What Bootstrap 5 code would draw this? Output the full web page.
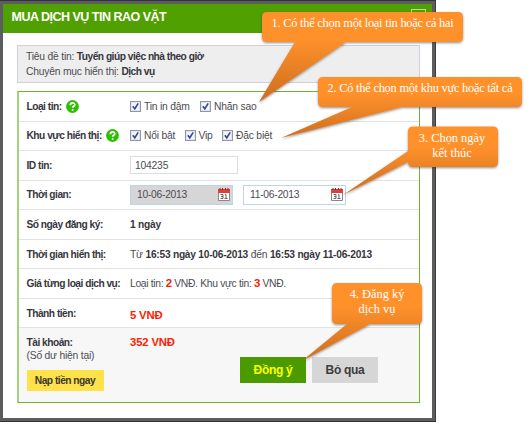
<!DOCTYPE html>
<html lang="vi">
<head>
<meta charset="utf-8">
<meta name="viewport" content="width=device-width, initial-scale=1">
<title>Mua dịch vụ tin rao vặt</title>
<link href="https://cdn.jsdelivr.net/npm/bootstrap@5.3.0/dist/css/bootstrap.min.css" rel="stylesheet">
<style>
body{font:10.3px/15px "Liberation Sans",Arial,sans-serif;letter-spacing:-.2px;color:#4c4c54;background:#fff;width:530px;height:423px}
b{color:#36363c;font-size:10.2px;letter-spacing:-.5px}
b.num{font-size:10.2px;letter-spacing:-.24px}
.frame{width:435.5px;height:422px;background:#5b5d5e;border-top:1px solid #33343a;border-right:1px solid #3c3d3f;border-bottom:1px solid #333;padding:3px}
.dialog{height:414px;background:#fff}
.title-bar{height:29px;background:#4fa000;color:#fff;font-size:12.5px;letter-spacing:-.5px;font-weight:bold;padding:0 12px 2px 8.5px}
.close-box{width:15px;height:14px;border:1px solid #b9dd94;margin-top:5px;margin-right:-6px}
.info{margin:12px 12px 8px 14px;height:38px;background:#eee;border:1px solid #cfd0dc;padding:3px 8px}
.sheet{margin:0 12px 0 14px;height:311.5px;border:1px solid #6db52f;border-left:2px solid #a5d27d}
.line{height:29.55px;border-bottom:1px solid #e2e2e2;padding-left:7.5px;white-space:nowrap}
.key{width:103.5px;flex:none}
.foot{flex:1;background:#f7f7f7;padding:8px 0 0 7.5px;line-height:13px;white-space:nowrap}
.opt-a{width:70px}.opt-b{width:54.5px}.opt-c{width:37.5px}
.tick{width:11px;height:11px;border:1px solid #8e98a8;background:#dfe4ee;flex:none;margin-right:3px;display:block}
.field{height:18px;width:108px;border:1px solid #ddd;background:#fff;padding-left:4px}
.date{height:20px;width:103px;border:1px solid #bdd3f4;background:#fff;padding:0 2px 0 6px}
.date.off{background:#d6d6d6;margin-right:10px}
.date span{letter-spacing:-.27px}
.price{letter-spacing:-.31px}
b.red{color:#fb2200;font-size:11.5px}
.sum{font-size:11.3px;font-weight:bold;color:#fb2200;letter-spacing:-.15px}
.act{border:0;border-radius:0;padding:0;font-weight:bold;line-height:1;white-space:nowrap}
.topup{width:77px;height:21px;background:#ffe14a;color:#38382e;font-size:10.2px;letter-spacing:-.5px;margin-top:8px}
.ok,.skip{width:66px;height:26px;font-size:12px;letter-spacing:-.3px}
.ok{background:#4b9b00;color:#ff0}
.skip{background:#d6d6d6;color:#3c3c3c;margin-left:6px}
.balance{width:110px}
.actions{margin-top:21px}
.note{font:12.4px/15.3px "Liberation Serif","Times New Roman",serif;letter-spacing:0;color:#fff;text-align:center;white-space:nowrap}
.n1,.n2{letter-spacing:-.24px}
.n1{left:262px;top:16px;width:201px}.n2{left:318px;top:81px;width:204px}
.n3{left:407px;top:131px;width:90px}.n4{left:332px;top:287px;width:90px}
</style>
<script src="https://cdn.jsdelivr.net/npm/bootstrap@5.3.0/dist/js/bootstrap.bundle.min.js"></script>
</head>
<body class="position-relative overflow-hidden">
<svg width="0" height="0" class="position-absolute">
<symbol id="check" viewBox="0 0 9 9"><path d="M1 1h7v7H1z" fill="#f4f6fb"/><path d="M1.800 4.200l2 2.600L7.200 1.400" fill="none" stroke="#34479c" stroke-width="1.6"/></symbol>
<symbol id="cal" viewBox="0 0 12 13"><path d="M.5 2h11v10.500H.5z" fill="#fff" stroke="#8c8484"/><path d="M0 1h12v4H0z" fill="#e43b3b"/><path d="M2 0v2M4.500 0v2M7.500 0v2M10 0v2" stroke="#6e3030"/><path d="M2.500 6.500h2.500v4h-2.500M3 8.500h2M7 7l1-.5v4M6.500 10.500h3" stroke="#555" fill="none" stroke-width=".9"/></symbol>
<symbol id="help" viewBox="0 0 13 13"><circle cx="6.5" cy="6.5" r="6.4" fill="#2cc000"/><path d="M4.300 5.200c0-3 4.500-3 4.500-.4 0 1.500-2.200 1.400-2.200 3" fill="none" stroke="#fff" stroke-width="1.7"/><circle cx="6.6" cy="9.9" r="1" fill="#fff"/></symbol>
</svg>
<main class="frame">
<div class="dialog d-flex flex-column">
<header class="title-bar d-flex align-items-center justify-content-between"><span>MUA DỊCH VỤ TIN RAO VẶT</span><span class="close-box align-self-start"></span></header>
<section class="info">
<div>Tiêu đề tin: <b>Tuyển giúp việc nhà theo giờ</b></div>
<div>Chuyên mục hiển thị: <b>Dịch vụ</b></div>
</section>
<section class="sheet d-flex flex-column">
<div class="line d-flex align-items-center"><div class="key d-flex align-items-center"><b>Loại tin:</b><svg class="ms-1 flex-shrink-0" width="13" height="13"><use href="#help"/></svg></div><div class="opt-a d-flex align-items-center"><svg class="tick"><use href="#check"/></svg><span>Tin in đậm</span></div><svg class="tick"><use href="#check"/></svg><span>Nhãn sao</span></div>
<div class="line d-flex align-items-center"><div class="key d-flex align-items-center"><b>Khu vực hiển thị:</b><svg class="ms-1 flex-shrink-0" width="13" height="13"><use href="#help"/></svg></div><div class="opt-b d-flex align-items-center"><svg class="tick"><use href="#check"/></svg><span>Nổi bật</span></div><div class="opt-c d-flex align-items-center"><svg class="tick"><use href="#check"/></svg><span>Vip</span></div><svg class="tick"><use href="#check"/></svg><span>Đặc biệt</span></div>
<div class="line d-flex align-items-center"><div class="key"><b>ID tin:</b></div><div class="field d-flex align-items-center">104235</div></div>
<div class="line d-flex align-items-center"><div class="key"><b>Thời gian:</b></div><div class="date off d-flex align-items-center justify-content-between"><span>10-06-2013</span><svg width="12" height="13"><use href="#cal"/></svg></div><div class="date d-flex align-items-center justify-content-between"><span>11-06-2013</span><svg width="12" height="13"><use href="#cal"/></svg></div></div>
<div class="line d-flex align-items-center"><div class="key"><b>Số ngày đăng ký:</b></div><b class="num">1 ngày</b></div>
<div class="line d-flex align-items-center"><div class="key"><b>Thời gian hiển thị:</b></div><span>Từ <b class="num">16:53 ngày 10-06-2013</b> đến <b class="num">16:53 ngày 11-06-2013</b></span></div>
<div class="line d-flex align-items-center"><div class="key"><b>Giá từng loại dịch vụ:</b></div><span class="price">Loại tin: <b class="red">2</b> VNĐ. Khu vực tin: <b class="red">3</b> VNĐ.</span></div>
<div class="line d-flex align-items-center"><div class="key"><b>Thành tiền:</b></div><span class="sum pt-1">5 VNĐ</span></div>
<div class="foot d-flex">
<div class="key"><b>Tài khoản:</b><div>(Số dư hiện tại)</div><button class="act topup">Nạp tiền ngay</button></div>
<div class="balance"><span class="sum">352 VNĐ</span></div>
<div class="actions d-flex align-items-start"><button class="act ok">Đồng ý</button><button class="act skip">Bỏ qua</button></div>
</div>
</section>
</div>
</main>
<svg class="position-absolute top-0 start-0" width="530" height="423">
<defs><linearGradient id="o" x2="0" y2="1"><stop offset=".3" stop-color="#ff912b"/><stop offset="1" stop-color="#cc6d1f"/></linearGradient>
<filter id="s" x="-10%" y="-10%" width="120%" height="130%"><feDropShadow dx="0" dy="1.2" stdDeviation="1" flood-color="#333" flood-opacity=".5"/></filter></defs>
<g fill="url(#o)" filter="url(#s)">
<path d="M267 12H458q5 0 5 5V37q0 5-5 5H346L259 102 295 42H267q-5 0-5-5V17q0-5 5-5z"/>
<path d="M323 77H517q5 0 5 5V102q0 5-5 5H402L281 138 352 107H323q-5 0-5-5V82q0-5 5-5z"/>
<path d="M413 126.500H493q5 0 5 5V162q0 5-5 5H413q-5 0-5-5L343 195 408 151V131.500q0-5 5-5z"/>
<path d="M337 283H417q5 0 5 5V319q0 5-5 5H370L302 361 347 324H337q-5 0-5-5V288q0-5 5-5z"/>
</g></svg>
<div class="note n1 position-absolute">1. Có thể chọn một loại tin hoặc cả hai</div>
<div class="note n2 position-absolute">2. Có thể chọn một khu vực hoặc tất cả</div>
<div class="note n3 position-absolute">3. Chọn ngày<br>kết thúc</div>
<div class="note n4 position-absolute">4. Đăng ký<br>dịch vụ</div>
</body>
</html>
